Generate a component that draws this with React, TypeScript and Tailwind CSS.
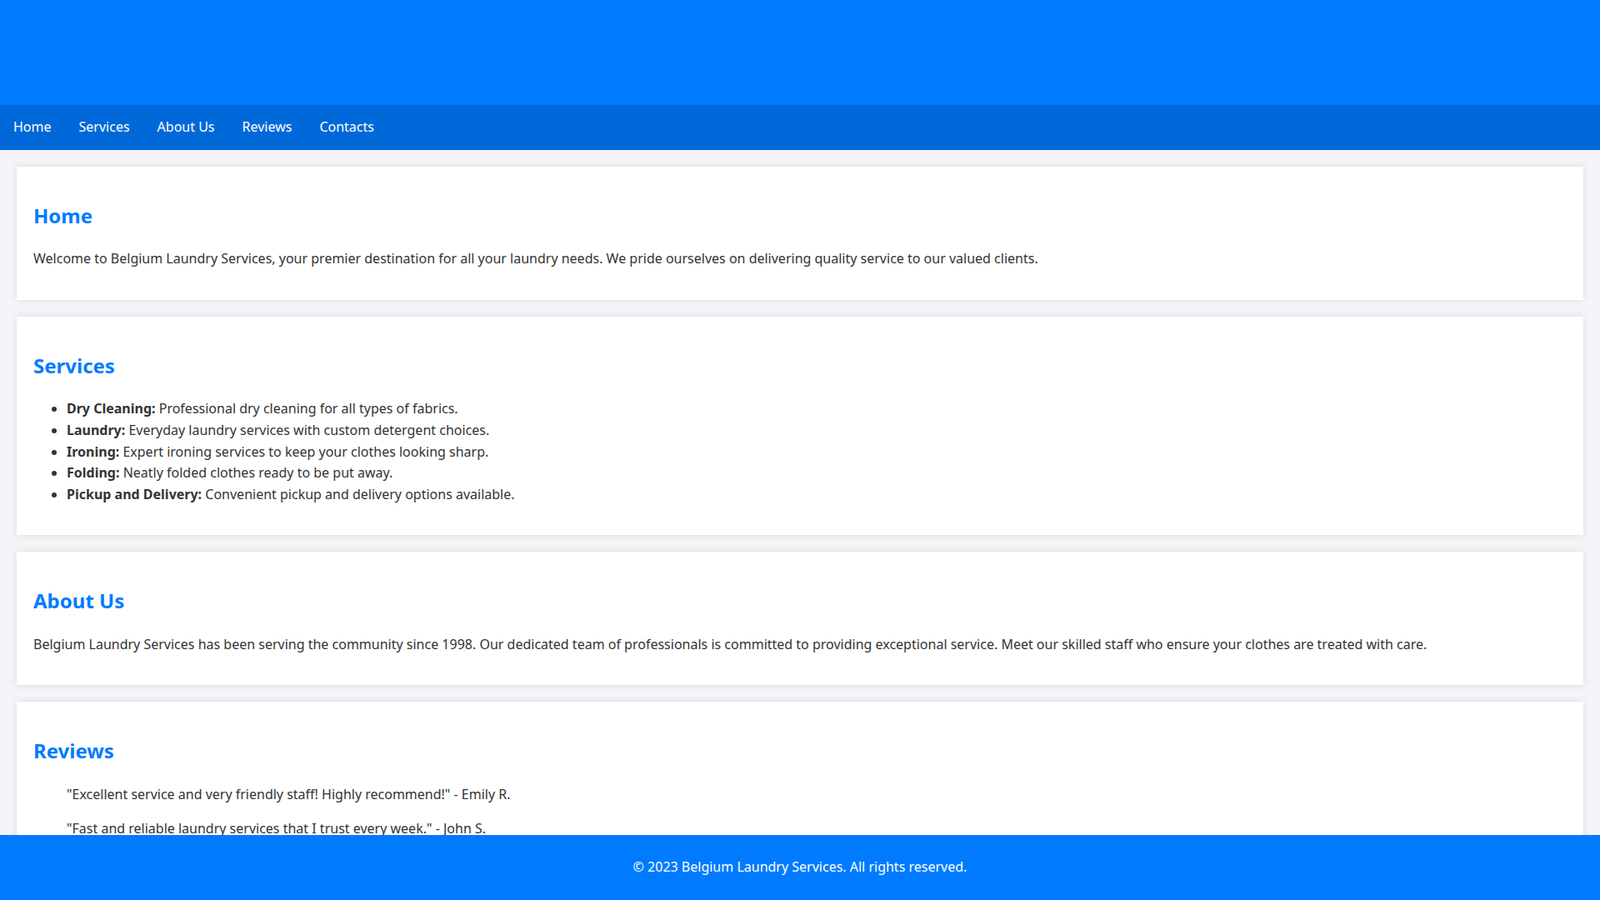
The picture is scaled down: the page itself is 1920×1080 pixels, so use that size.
const services = [
  ['Dry Cleaning:', 'Professional dry cleaning for all types of fabrics.'],
  ['Laundry:', 'Everyday laundry services with custom detergent choices.'],
  ['Ironing:', 'Expert ironing services to keep your clothes looking sharp.'],
  ['Folding:', 'Neatly folded clothes ready to be put away.'],
  ['Pickup and Delivery:', 'Convenient pickup and delivery options available.'],
]

function Section({ title, children }: { title: string; children: React.ReactNode }) {
  return (
    <section className="bg-white px-5 py-5 mb-5 shadow-[0_0_10px_rgba(0,0,0,0.1)] flow-root">
      <h2 className="text-[24px] font-bold text-[#007bff] my-[20px]">{title}</h2>
      {children}
    </section>
  )
}

export default function App() {
  return (
    <div className="min-h-screen bg-[#f4f4f9] text-[#333] text-[16px] leading-[1.6] [font-family:'Liberation_Sans',Arial,sans-serif] pb-[100px]">
      <header className="h-[126px] bg-[#007bff]" />
      <nav className="flex bg-[#0069d9] h-[54px] items-center">
        {['Home', 'Services', 'About Us', 'Reviews', 'Contacts'].map(n => (
          <a key={n} className="text-white px-4 mr-px">{n}</a>
        ))}
      </nav>
      <main className="px-5 pt-5">
        <Section title="Home">
          <p className="my-4">Welcome to Belgium Laundry Services, your premier destination for all your laundry needs. We pride ourselves on delivering quality service to our valued clients.</p>
        </Section>
        <Section title="Services">
          <ul className="list-disc pl-10 my-4">
            {services.map(([b, t]) => (
              <li key={b}><strong>{b}</strong> {t}</li>
            ))}
          </ul>
        </Section>
        <Section title="About Us">
          <p className="my-4">Belgium Laundry Services has been serving the community since 1998. Our dedicated team of professionals is committed to providing exceptional service. Meet our skilled staff who ensure your clothes are treated with care.</p>
        </Section>
        <Section title="Reviews">
          <blockquote className="mx-10 my-4"><p className="my-4">"Excellent service and very friendly staff! Highly recommend!" - Emily R.</p></blockquote>
          <blockquote className="mx-10 my-4"><p className="my-4">"Fast and reliable laundry services that I trust every week." - John S.</p></blockquote>
        </Section>
        <Section title="Contacts">
          <p className="my-4">Phone: +32 2 123 45 67</p>
        </Section>
      </main>
      <footer className="fixed bottom-0 left-0 right-0 h-[78px] bg-[#007bff] text-white flex items-center justify-center">
        © 2023 Belgium Laundry Services. All rights reserved.
      </footer>
    </div>
  )
}
